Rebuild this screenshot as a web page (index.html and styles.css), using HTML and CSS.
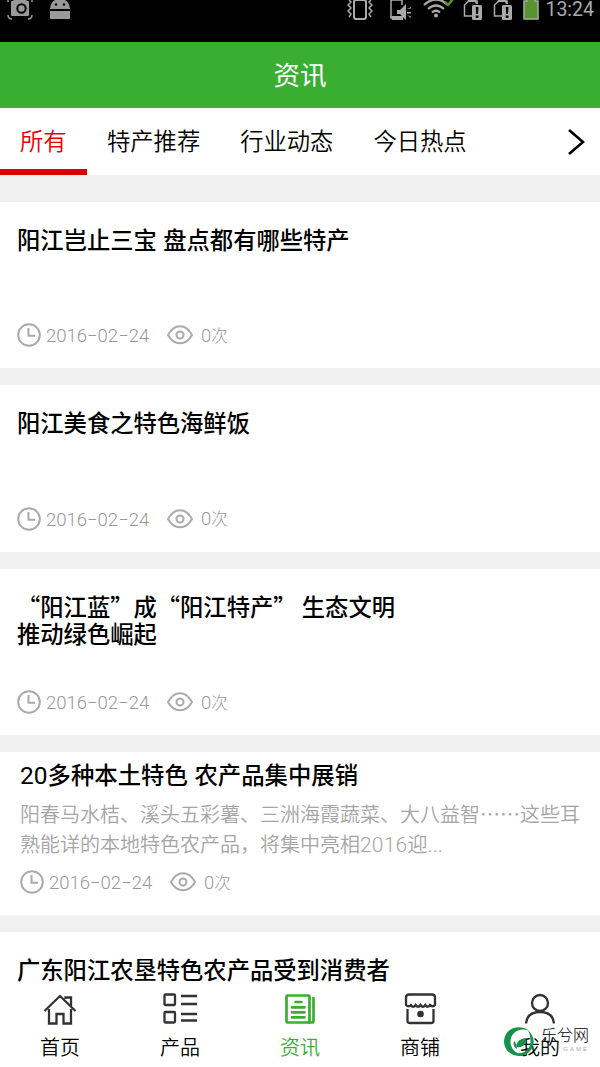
FILE: index.html
```
<!DOCTYPE html>
<html lang="zh-CN">
<head>
    <meta charset="UTF-8">
    <meta name="viewport" content="width=device-width, initial-scale=1.0">
    <title>资讯</title>
    <link rel="stylesheet" href="styles.css">
</head>
<body>
    <svg class="symbols">
        <symbol id="clock" viewBox="0 0 24 24">
            <circle cx="12" cy="12" r="10.8"/>
            <path d="M11.500 5v7.700H18"/>
        </symbol>
        <symbol id="eye" viewBox="0 0 26 20">
            <path d="M1 10C4 4.500 8.500 1.300 13 1.300S22 4.500 25 10C22 15.500 17.500 18.300 13 18.300S4 15.500 1 10z"/>
            <circle cx="13" cy="10" r="3.500"/>
        </symbol>
        <symbol id="sim" viewBox="0 0 20 22">
            <path d="M14 4V1H6L1.500 5v11H9" fill="none" stroke="#aaa" stroke-width="1.500"/>
            <path d="M5 0h8l2 4h-2l-1-2H4z"/>
            <rect x="9" y="5" width="10" height="15" rx="1.500"/>
            <path d="M12.700 7h2.800l-.5 7h-1.800zM12.700 15.500h2.800V18h-2.800z" fill="#000"/>
        </symbol>
    </svg>

    <div class="status-bar">
        <div class="status-left">
            <svg width="26" height="22" viewBox="0 0 26 22">
                <path d="M6 1l2-3h10l2 3h1q1 0 1 1v13q0 1-1 1H5q-1 0-1-1V2q0-1 1-1z"/>
                <circle cx="14.500" cy="8.500" r="4.200" fill="none" stroke="#000" stroke-width="2"/>
                <path d="M1 15q0 4 4 4M21 19q4 0 4-4M1 2V0M25 2V0" fill="none" stroke="#999" stroke-width="1.500"/>
            </svg>
            <svg width="20" height="22" viewBox="0 0 20 22">
                <path d="M0 9Q1-1 10-1T20 9zM0 11h20v8H0z"/>
                <circle cx="6" cy="4.500" r="1.200" fill="#000"/>
                <circle cx="14" cy="4.500" r="1.200" fill="#000"/>
            </svg>
        </div>
        <div class="status-right">
            <svg width="26" height="22" viewBox="0 0 26 22">
                <rect x="7" y="0" width="12" height="19" rx="2" fill="none" stroke="#aaa" stroke-width="2"/>
                <path d="M2 0l2 2-3 3 3 3-3 3 3 3-2 3M24 0l-2 2 3 3-3 3 3 3-3 3 2 3" fill="none" stroke="#aaa" stroke-width="1.500"/>
            </svg>
            <svg class="mute" width="22" height="22" viewBox="0 0 22 22">
                <path d="M12 5V0H1v18h10" fill="none" stroke="#aaa" stroke-width="1.500"/>
                <path d="M1 16h12v4H2zM7 10h3l6-6v16l-6-6H7zM17 9l4-2v1.500zM17 12h4v1.500h-4zM17 15l4 1.500V18z"/>
            </svg>
            <svg class="wifi" width="32" height="22" viewBox="0 0 32 22">
                <path d="M1 5Q13-6 25 5M5 9q8-7 16 0M9 12.500q4-3.500 8 0" fill="none" stroke="#aaa" stroke-width="2.200"/>
                <circle cx="13" cy="15.500" r="2"/>
                <path d="M22 2l3 3 5-6" fill="none" stroke="#57932e" stroke-width="2.500"/>
            </svg>
            <svg class="sim" width="20" height="22"><use href="#sim"/></svg>
            <svg class="sim" width="20" height="22"><use href="#sim"/></svg>
            <svg class="battery" width="16" height="22" viewBox="0 0 16 22">
                <path d="M1 19V1h3v-3h8v3h3v18z" fill="#57932e" stroke="#aaa" stroke-width="1.500"/>
            </svg>
            <span>13:24</span>
        </div>
    </div>

    <div class="header">资讯</div>

    <div class="tabs">
        <a class="tab active">所有</a>
        <a class="tab">特产推荐</a>
        <a class="tab">行业动态</a>
        <a class="tab">今日热点</a>
        <svg class="more" width="20" height="28" viewBox="0 0 20 28">
            <path d="M2 2l14 12L2 26"/>
        </svg>
    </div>

    <div class="news-list">
        <div class="news">
            <h3>阳江岂止三宝 盘点都有哪些特产</h3>
            <div class="meta">
                <svg class="clock"><use href="#clock"/></svg><span class="date">2016−02−24</span>
                <svg class="eye"><use href="#eye"/></svg><span>0<small>次</small></span>
            </div>
        </div>
        <div class="news">
            <h3>阳江美食之特色海鲜饭</h3>
            <div class="meta">
                <svg class="clock"><use href="#clock"/></svg><span class="date">2016−02−24</span>
                <svg class="eye"><use href="#eye"/></svg><span>0<small>次</small></span>
            </div>
        </div>
        <div class="news quoted">
            <h3>“阳江蓝”成“阳江特产” 生态文明<br>推动绿色崛起</h3>
            <div class="meta">
                <svg class="clock"><use href="#clock"/></svg><span class="date">2016−02−24</span>
                <svg class="eye"><use href="#eye"/></svg><span>0<small>次</small></span>
            </div>
        </div>
        <div class="news with-desc">
            <h3><span class="num">20</span>多种本土特色 农产品集中展销</h3>
            <p>阳春马水桔、溪头五彩薯、三洲海霞蔬菜、大八益智<span class="dots">……</span>这些耳<br>熟能详的本地特色农产品，将集中亮相<span class="year">2016</span>迎<span class="year">...</span></p>
            <div class="meta">
                <svg class="clock"><use href="#clock"/></svg><span class="date">2016−02−24</span>
                <svg class="eye"><use href="#eye"/></svg><span>0<small>次</small></span>
            </div>
        </div>
        <div class="news last">
            <h3>广东阳江农垦特色农产品受到消费者</h3>
        </div>
    </div>

    <div class="nav">
        <a class="nav-item">
            <svg viewBox="0 0 36 34">
                <path d="M2.500 18L18 3l15.500 15M7 16v14.500h7.500V21h7v9.500H29V16M23.500 6V4.500H29V13"/>
            </svg>
            <span>首页</span>
        </a>
        <a class="nav-item">
            <svg viewBox="0 0 36 34">
                <rect x="2.500" y="1.500" width="10.500" height="10.500" rx="1"/>
                <rect x="2.500" y="19" width="10.500" height="10.500" rx="1"/>
                <path d="M19 3h16M19 11h16M19 21h16M19 27.500h16"/>
            </svg>
            <span>产品</span>
        </a>
        <a class="nav-item active">
            <svg viewBox="0 0 36 34">
                <rect x="4.500" y="2.500" width="23" height="27" rx="1"/>
                <path d="M27 29.500h3q1.500 0 1.500-1.500V5"/>
                <path d="M13.500 9h6M10 14.300h12.500M10 19.300h12.500M10 24.300h12.500"/>
            </svg>
            <span>资讯</span>
        </a>
        <a class="nav-item">
            <svg viewBox="0 0 36 34">
                <path d="M4 12V4.500Q4 1.500 7 1.500h23q3 0 3 3V12q-2 2.500-5 0-2 3.500-4.700 0-2.500 3.500-4.800 0-2.300 3.500-4.800 0-2.500 3.500-4.800 0-2.500 2.500-4.900 0zM5.500 16v12q0 2 2.500 2h21q2.500 0 2.500-2V16"/>
                <circle class="dot" cx="18.500" cy="21" r="2.200"/>
            </svg>
            <span>商铺</span>
        </a>
        <a class="nav-item">
            <svg viewBox="0 0 36 34">
                <circle cx="18" cy="10" r="8"/>
                <path d="M4 30.500Q5 19 18 19T32 30.500"/>
            </svg>
            <span>我的</span>
        </a>
        <div class="watermark">
            <svg width="31" height="32" viewBox="0 0 31 32">
                <path d="M25 4.500C16-2 1 1 0 15c0 10 9 17 19 14.500C11 27 6 22 6.500 15 7 6 16 1 25 4.500z"/>
                <path d="M24 4c8 7 7 18 0 23-5 3.500-10 2.500-12 0 8 1 14-3 14.500-11 0-4-.5-8-2.500-12z"/>
                <path d="M22 12c-7 1-10 4-9 9 6 1 9-3 9-9zM10 15c-1 4 0 6 3 8 0-4-1-6-3-8z"/>
            </svg>
            <div class="watermark-text"><b>乐兮网</b><i>GAME</i></div>
        </div>
    </div>
</body>
</html>
```
FILE: styles.css
```
* {
    box-sizing: border-box;
}
body {
    margin: 0;
    width: 600px;
    height: 1067px;
    overflow: hidden;
    display: flex;
    flex-direction: column;
    background: #f0f0f0;
    font-family: "Liberation Sans", "Noto Sans CJK SC", sans-serif;
    color: #000;
}
svg {
    display: block;
    flex-shrink: 0;
}
.symbols {
    display: none;
}
.status-bar {
    height: 42px;
    flex-shrink: 0;
    background: #000;
    display: flex;
    justify-content: space-between;
    align-items: flex-start;
    padding: 0 6px 0 7px;
    fill: #aaa;
}
.status-left {
    display: flex;
    gap: 17px;
    fill: #999;
}
.status-right {
    display: flex;
    color: #aaa;
    font-family: Roboto, sans-serif;
    font-size: 19.500px;
    line-height: 20px;
}
.status-right .mute {
    margin-left: 17px;
}
.status-right .wifi {
    margin-left: 11px;
}
.status-right .sim {
    margin-left: 10px;
}
.status-right .wifi + .sim {
    margin-left: 8px;
}
.status-right .battery {
    margin: 0 6px 0 10px;
}
.header {
    height: 66px;
    flex-shrink: 0;
    background: #3aae31;
    color: #fff;
    font-size: 26.500px;
    line-height: 68px;
    text-align: center;
}
.tabs {
    height: 67px;
    flex-shrink: 0;
    margin-bottom: 27px;
    background: #fff;
    display: flex;
    font-size: 23.300px;
    font-weight: 350;
    line-height: 69px;
}
.tab {
    padding: 0 20px;
}
.tab.active {
    width: 87px;
    color: #e60000;
    border-bottom: 6px solid #d90000;
}
.more {
    margin: 20px 13px 0 auto;
    fill: none;
    stroke: #000;
    stroke-width: 2.600;
}
.news-list {
    display: flex;
    flex-direction: column;
    gap: 17px;
}
.news {
    height: 166.400px;
    flex-shrink: 0;
    padding: 26px 17px 20px;
    background: #fff;
    display: flex;
    flex-direction: column;
    justify-content: space-between;
}
.news h3 {
    margin: 0;
    font-size: 23.300px;
    font-weight: 500;
    line-height: 27px;
    white-space: nowrap;
}
.news.quoted {
    padding-top: 24px;
}
/* CJK font first, so the quotes are full width */
.news.quoted h3 {
    font-family: "Noto Sans CJK SC", sans-serif;
}
.news p {
    margin: 0;
    color: #a5a5a5;
    font-size: 20px;
    font-weight: 350;
    line-height: 30px;
    white-space: nowrap;
}
.dots {
    font-family: "Noto Sans CJK SC", sans-serif;
}
.year {
    font-family: Roboto, sans-serif;
    font-weight: 300;
    font-size: 21px;
    line-height: 20px;
    letter-spacing: 0.200px;
}
.news.with-desc {
    height: 163px;
    padding: 11px 20px 20px;
}
.news.with-desc h3 {
    font-size: 23.400px;
}
.num {
    font-family: Roboto, sans-serif;
    font-weight: 400;
    font-size: 24.500px;
    line-height: 20px;
}
.news.last {
    height: 140px;
}
.meta {
    display: flex;
    align-items: center;
    height: 26px;
    color: #999;
    font-family: Roboto, "Noto Sans CJK SC", sans-serif;
    font-size: 18.500px;
    font-weight: 300;
    line-height: 26px;
}
.meta span {
    padding-top: 2px;
}
.meta small {
    font-size: 16.500px;
}
.meta svg {
    fill: none;
    stroke: #aaa;
    stroke-width: 2;
}
.clock {
    width: 24px;
    height: 24px;
    margin-right: 5px;
}
.date {
    width: 103px;
    white-space: nowrap;
}
.eye {
    width: 26px;
    height: 20px;
    margin: 0 8px 0 18px;
}
.nav {
    position: absolute;
    left: 0;
    top: 986px;
    width: 600px;
    height: 81px;
    background: #fff;
    display: flex;
}
.nav-item {
    width: 120px;
    padding-top: 7px;
    display: flex;
    flex-direction: column;
    align-items: center;
    font-size: 20px;
    font-weight: 350;
    line-height: 42px;
}
.nav-item svg {
    width: 36px;
    height: 34px;
    fill: none;
    stroke: #333;
    stroke-width: 2.300;
}
.nav-item .dot {
    fill: #333;
}
.nav-item.active {
    color: #3aae31;
}
.nav-item.active svg {
    stroke: #3aae31;
    stroke-width: 2.700;
    stroke-linecap: round;
}
.watermark {
    position: absolute;
    left: 504px;
    top: 40px;
    display: flex;
    gap: 6px;
    fill: #14914a;
}
.watermark-text {
    display: flex;
    flex-direction: column;
    font-size: 16px;
    line-height: 19px;
}
.watermark-text b {
    font-weight: 300;
}
.watermark-text i {
    color: #aaa;
    font-size: 6px;
    font-style: normal;
    letter-spacing: 2px;
    line-height: 8px;
    text-align: right;
}
```
